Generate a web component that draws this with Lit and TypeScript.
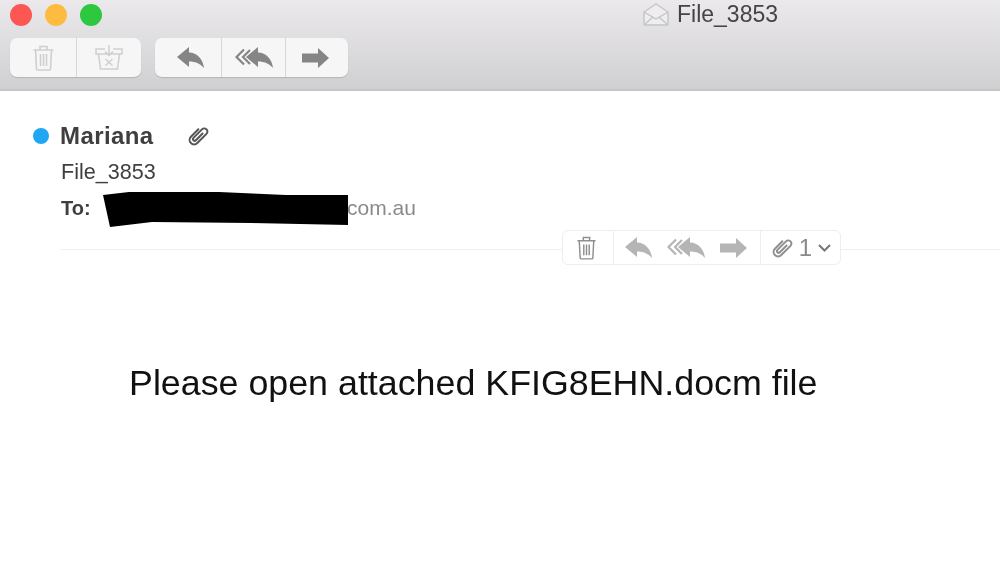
import { LitElement, css, html, svg } from "lit";
import { customElement } from "lit/decorators.js";

const replyHead = svg`<path d="M0 10 L12 0 V5.5 C20 5.5 26 12 27 21 C23 16.5 18 14.5 12 14.5 V20 Z" fill="currentColor"/>`;

const replyIcon = html`<svg width="27" height="21" viewBox="0 0 27 21">${replyHead}</svg>`;

const replyAllIcon = html`<svg width="38" height="21" viewBox="0 0 38 21">
  <path d="M9 2.5 L1.5 10 L9 17.5 M15 3 L8 10 L15 17" fill="none" stroke="currentColor" stroke-width="2.2"/>
  <g transform="translate(11 0)">${replyHead}</g>
</svg>`;

const forwardIcon = html`<svg width="27" height="20" viewBox="0 0 27 20">
  <path d="M0 5.5 H16 V0 L27 10 L16 20 V14.5 H0 Z" fill="currentColor"/>
</svg>`;

const trashIcon = (w: number, h: number) => html`<svg width=${w} height=${h} viewBox="0 0 21 26" fill="none" stroke="currentColor" stroke-width="1.6">
  <path d="M0.5 5 H20.5 M7 5 V1.5 H14 V5 M2.5 5 L3.5 24 Q3.6 25 4.6 25 H16.4 Q17.4 25 17.5 24 L18.5 5"/>
  <path d="M7.5 9 V21 M10.5 9 V21 M13.5 9 V21"/>
</svg>`;

const junkIcon = html`<svg width="28" height="25" viewBox="0 0 28 25" fill="none" stroke="currentColor" stroke-width="1.5">
  <path d="M10 4 H1 V9 H27 V4 H18 M3.5 9 L5.5 24 H22.5 L24.5 9"/>
  <path d="M14 0 V10 M10 6.5 L14 10.5 L18 6.5 M10.5 14 L17.5 20.5 M17.5 14 L10.5 20.5"/>
</svg>`;

const clipIcon = (size: number) => html`<svg width=${size} height=${size} viewBox="0 0 24 24" fill="none" stroke="currentColor" stroke-width="2" stroke-linecap="round">
  <path transform="rotate(45 12 12)" d="M7.5 7 V17.5 a4.5 4.5 0 0 0 9 0 V4.5 a3.2 3.2 0 0 0 -6.4 0 V16.5 a1.7 1.7 0 0 0 3.4 0 V7"/>
</svg>`;

@customElement("app-root")
export class AppRoot extends LitElement {
  static styles = css`
    :host {
      display: block;
      width: 1000px;
      height: 580px;
      overflow: hidden;
      background: #fff;
      font-family: "Liberation Sans", Arial, sans-serif;
      color: #3f3f3f;
      filter: blur(0.4px);
    }
    .titlebar {
      height: 91px;
      box-sizing: border-box;
      padding: 3px 0 0 10px;
      background: linear-gradient(#ebe9eb, #d0cfd1);
      border-bottom: 2px solid #c6c5c7;
    }
    .top {
      display: flex;
      align-items: center;
      height: 23px;
    }
    .lights {
      display: flex;
      gap: 13px;
    }
    .light {
      width: 22px;
      height: 22px;
      border-radius: 50%;
    }
    .red { background: #fc5753; }
    .yellow { background: #fdbc40; }
    .green { background: #2dc840; }
    .title {
      display: flex;
      align-items: center;
      gap: 8px;
      margin-left: 541px;
      font-size: 23px;
      color: #444;
    }
    .toolbar {
      display: flex;
      gap: 14px;
      margin-top: 12px;
    }
    .group {
      display: flex;
      height: 39px;
      background: #f7f6f7;
      border-radius: 7px;
      box-shadow: 0 1px 1px #b5b4b6;
    }
    .group > div {
      display: flex;
      align-items: center;
      justify-content: center;
      border-left: 1px solid #d8d7d8;
    }
    .group > div:first-child { border-left: 0; }
    .light-icons { color: #cfcfcf; }
    .dark-icons { color: #858585; }
    .nudge-right { padding-left: 4px; box-sizing: border-box; }
    .nudge-left { padding-right: 3px; box-sizing: border-box; }
    .main {
      position: relative;
      padding: 30px 0 0 33px;
    }
    .sender {
      display: flex;
      align-items: center;
      height: 30px;
    }
    .dot {
      width: 16px;
      height: 16px;
      border-radius: 50%;
      background: #1fa8f1;
      margin-right: 11px;
    }
    .name {
      font-size: 24px;
      font-weight: 700;
      letter-spacing: 0.4px;
      width: 126px;
    }
    .sender svg { color: #555; }
    .subject {
      margin: 6px 0 0 28px;
      font-size: 21.6px;
      line-height: 30px;
    }
    .to {
      display: flex;
      align-items: center;
      margin: 4px 0 0 28px;
      height: 34px;
    }
    .to b {
      font-size: 20px;
      width: 42px;
    }
    .to span {
      font-size: 21px;
      color: #8a8a8a;
      margin-left: -1px;
    }
    .to svg {
      flex: none;
      margin-top: 3px;
    }
    .rule {
      height: 1px;
      margin: 24px 0 0 28px;
      background: #f0f0f0;
    }
    .actions {
      position: absolute;
      left: 562px;
      top: 139px;
      display: flex;
      height: 35px;
      box-sizing: border-box;
      color: #b5b5b5;
      background: #fff;
      border: 1px solid #eeeeee;
      border-radius: 6px;
    }
    .actions > div {
      display: flex;
      align-items: center;
      justify-content: center;
      border-left: 1px solid #eeeeee;
    }
    .actions > div:first-child { border-left: 0; }
    .actions .trash {
      color: #8f8f8f;
      padding-right: 4px;
      box-sizing: border-box;
    }
    .actions .arrows {
      justify-content: flex-start;
      gap: 15px;
      padding-left: 11px;
      box-sizing: border-box;
    }
    .count {
      font-size: 24px;
      color: #8a8a8a;
      margin: 0 6px 0 5px;
    }
    .attach svg:first-child { color: #8f8f8f; }
    .body {
      margin: 112px 0 0 96px;
      font-size: 35.8px;
      line-height: 42px;
      color: #111;
      white-space: nowrap;
    }
  `;

  render() {
    return html`
      <header class="titlebar">
        <div class="top">
          <div class="lights">
            <div class="light red"></div>
            <div class="light yellow"></div>
            <div class="light green"></div>
          </div>
          <div class="title">
            <svg width="26" height="23" viewBox="0 0 26 23" fill="#efeeef" stroke="#c4c3c5" stroke-width="1.4">
              <path d="M1 9 L13 1 L25 9 V21 Q25 22 24 22 H2 Q1 22 1 21 Z"/>
              <path d="M1 9 L13 16 L25 9 M1 22 L10 14 M25 22 L16 14" fill="none"/>
            </svg>
            File_3853
          </div>
        </div>
        <div class="toolbar">
          <div class="group light-icons">
            <div style="width:66px">${trashIcon(21, 26)}</div>
            <div style="width:64px">${junkIcon}</div>
          </div>
          <div class="group dark-icons">
            <div class="nudge-right" style="width:66px">${replyIcon}</div>
            <div style="width:63px">${replyAllIcon}</div>
            <div class="nudge-left" style="width:63px">${forwardIcon}</div>
          </div>
        </div>
      </header>
      <main class="main">
        <div class="sender">
          <div class="dot"></div>
          <div class="name">Mariana</div>
          ${clipIcon(24)}
        </div>
        <div class="subject">File_3853</div>
        <div class="to">
          <b>To:</b>
          <svg width="245" height="35" viewBox="0 0 245 35">
            <path d="M0 3 L26 0 H116 L183 3 H245 V33 L149 31 L49 30 L7 35 Z" fill="#000"/>
          </svg>
          <span>com.au</span>
        </div>
        <div class="rule"></div>
        <div class="actions">
          <div class="trash" style="width:50px">${trashIcon(19, 24)}</div>
          <div class="arrows" style="width:147px">${replyIcon}${replyAllIcon}${forwardIcon}</div>
          <div class="attach" style="width:79px">
            ${clipIcon(24)}
            <span class="count">1</span>
            <svg width="13" height="8" viewBox="0 0 13 8" fill="none" stroke="#777" stroke-width="2"><path d="M1 1 L6.5 6.5 L12 1"/></svg>
          </div>
        </div>
        <div class="body">Please open attached KFIG8EHN.docm file</div>
      </main>
    `;
  }
}
